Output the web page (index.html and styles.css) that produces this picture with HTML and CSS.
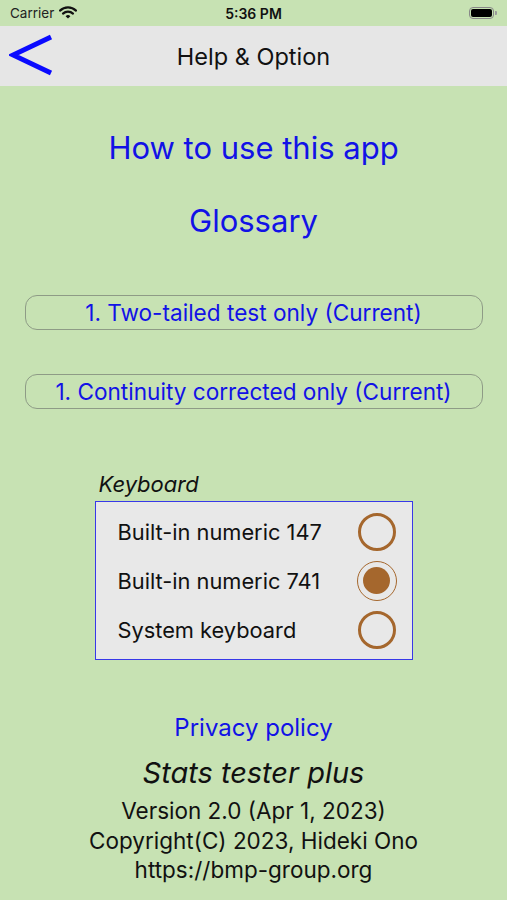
FILE: index.html
```html
<!DOCTYPE html>
<html lang="en">
<head>
<meta charset="utf-8">
<title>Help &amp; Option</title>
<link rel="stylesheet" href="styles.css">
</head>
<body>
<div class="status">
  <div class="status-left">
    <span class="carrier">Carrier</span>
    <svg class="wifi" width="18" height="13" viewBox="0 0 18 13">
      <path d="M1 4.6 A11.5 11.5 0 0 1 17 4.6" fill="none" stroke="#111" stroke-width="2.2" stroke-linecap="round"/>
      <path d="M4 7.6 A7.2 7.2 0 0 1 14 7.6" fill="none" stroke="#111" stroke-width="2.2" stroke-linecap="round"/>
      <path d="M6.6 10.2 L9 12.6 L11.4 10.2 A3.4 3.4 0 0 0 6.6 10.2 Z" fill="#111"/>
    </svg>
  </div>
  <div class="time">5:36 PM</div>
  <div class="status-right">
    <div class="battery"><div class="battery-fill"></div></div>
    <div class="battery-nub"></div>
  </div>
</div>

<header class="nav">
  <svg class="back" width="44" height="42" viewBox="0 0 44 42">
    <polyline points="42,3 4,21 42,39" fill="none" stroke="#0a0aff" stroke-width="5"/>
  </svg>
  <h1 class="nav-title">Help &amp; Option</h1>
</header>

<main class="content">
  <a class="big-link link-first">How to use this app</a>
  <a class="big-link link-second">Glossary</a>

  <button class="option-btn btn-first">1. Two-tailed test only (Current)</button>
  <button class="option-btn btn-second">1. Continuity corrected only (Current)</button>

  <section class="keyboard">
    <div class="kb-label">Keyboard</div>
    <div class="kb-box">
      <div class="kb-row"><span>Built-in numeric 147</span><span class="radio"></span></div>
      <div class="kb-row"><span>Built-in numeric 741</span><span class="radio selected"><span class="dot"></span></span></div>
      <div class="kb-row"><span>System keyboard</span><span class="radio"></span></div>
    </div>
  </section>

  <a class="privacy">Privacy policy</a>
  <div class="app-name">Stats tester plus</div>
  <div class="info">Version 2.0 (Apr 1, 2023)</div>
  <div class="info">Copyright(C) 2023, Hideki Ono</div>
  <div class="info">https://bmp-group.org</div>
</main>
</body>
</html>
```

FILE: styles.css
```css
* { box-sizing: border-box; }
html, body {
  margin: 0;
  padding: 0;
}
body {
  width: 507px;
  height: 900px;
  background: #c7e2b3;
  font-family: Inter, "Liberation Sans", Arial, sans-serif;
  color: #111;
  overflow: hidden;
}
.status {
  height: 26px;
  display: flex;
  align-items: center;
  justify-content: space-between;
  padding: 0 10px 0 10px;
  position: relative;
  font-size: 14px;
}
.status-left {
  display: flex;
  align-items: center;
  gap: 5px;
  width: 120px;
}
.carrier { color: #222; font-size: 13.5px; }
.wifi { margin-top: -1px; }
.time {
  font-weight: 600;
  font-size: 14px;
  color: #111;
}
.status-right {
  width: 120px;
  display: flex;
  justify-content: flex-end;
  align-items: center;
}
.battery {
  width: 25px;
  height: 12px;
  border: 1px solid #888;
  border-radius: 4px;
  padding: 1px;
}
.battery-fill {
  width: 100%;
  height: 100%;
  background: #000;
  border-radius: 2px;
}
.battery-nub {
  width: 2px;
  height: 4px;
  background: #999;
  border-radius: 0 1px 1px 0;
  margin-left: 1px;
}
.nav {
  height: 60px;
  background: #e6e6e6;
  display: flex;
  align-items: center;
  justify-content: center;
  position: relative;
}
.back {
  position: absolute;
  left: 9px;
  top: 8px;
}
.nav-title {
  margin: 0;
  font-weight: normal;
  font-size: 23.5px;
  color: #111;
}
.content {
  display: flex;
  flex-direction: column;
  align-items: center;
}
.big-link {
  color: #1212e6;
  font-size: 31px;
  line-height: 40px;
  height: 40px;
}
.link-first { margin-top: 42px; }
.link-second { margin-top: 33px; }
.option-btn {
  width: 458px;
  height: 35px;
  border: 1px solid #8e9b86;
  border-radius: 12px;
  background: transparent;
  font-family: Inter, "Liberation Sans", Arial, sans-serif;
  font-size: 22.6px;
  color: #1212e6;
  padding: 0;
  line-height: 33px;
}
.btn-first { margin-top: 54px; }
.btn-second { margin-top: 44px; }
.keyboard {
  margin-top: 62px;
  width: 318px;
  display: flex;
  flex-direction: column;
}
.kb-label {
  font-style: italic;
  font-size: 22px;
  line-height: 26px;
  padding-left: 4px;
  margin-bottom: 4px;
}
.kb-box {
  border: 1px solid #3838e8;
  background: #e8e8e8;
  padding: 5px 16px 5px 22px;
}
.kb-row {
  height: 49px;
  display: flex;
  align-items: center;
  justify-content: space-between;
  font-size: 21.8px;
  color: #111;
}
.radio {
  width: 38px;
  height: 38px;
  border: 3px solid #a5672d;
  border-radius: 50%;
  display: flex;
  align-items: center;
  justify-content: center;
}
.radio.selected {
  width: 40px;
  height: 40px;
  margin-right: -1px;
  border-width: 1.5px;
}
.dot {
  width: 27px;
  height: 27px;
  border-radius: 50%;
  background: #a5672d;
}
.privacy {
  margin-top: 53px;
  color: #1212e6;
  font-size: 24px;
  line-height: 30px;
}
.app-name {
  margin-top: 14px;
  font-style: italic;
  font-size: 29px;
  line-height: 32px;
}
.info {
  font-size: 22.5px;
  line-height: 29.5px;
}
.app-name + .info { margin-top: 7px; }
```
